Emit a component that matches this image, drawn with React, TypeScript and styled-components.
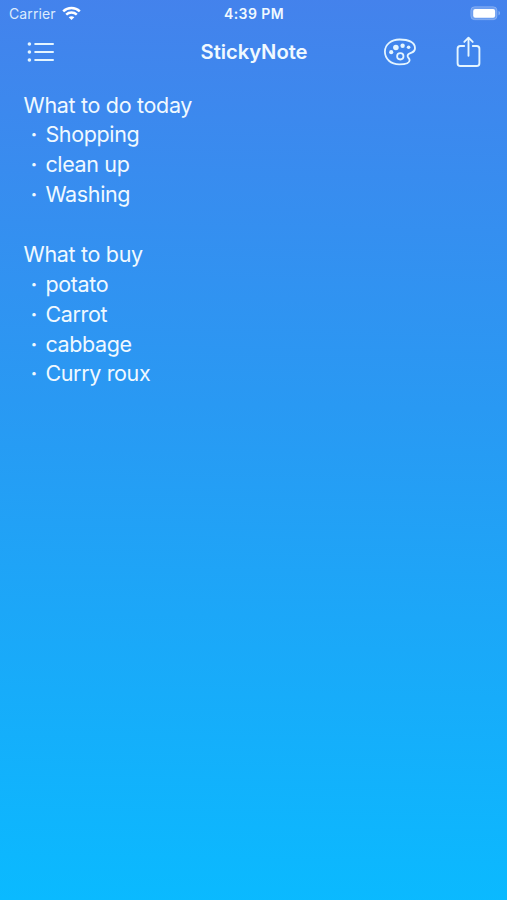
import React from "react";
import styled, { createGlobalStyle } from "styled-components";

const GlobalStyle = createGlobalStyle`
  * { box-sizing: border-box; }
  body { margin: 0; }
`;

const Screen = styled.main`
  width: 100%;
  height: 900px;
  overflow: hidden;
  display: flex;
  flex-direction: column;
  color: #f0f9ff;
  font-family: Inter, "Liberation Sans", sans-serif;
  background: linear-gradient(181deg, #4482ec 0%, #2999f3 45%, #0abaff 100%);
`;

const StatusBar = styled.header`
  height: 27px;
  display: grid;
  grid-template-columns: 1fr auto 1fr;
  align-items: center;
  padding: 0 6px 0 9px;
  font-size: 14px;
  line-height: 27px;
`;

const Carrier = styled.div`
  display: flex;
  align-items: center;
  gap: 6px;
  letter-spacing: 0.1px;
  color: #dcebfd;
`;

const Clock = styled.time`
  font-weight: 600;
  letter-spacing: 0.4px;
  margin-right: 2px;
`;

const BatterySlot = styled.div`
  display: flex;
  justify-content: flex-end;
`;

const NavBar = styled.nav`
  height: 50px;
  display: grid;
  grid-template-columns: 1fr auto 1fr;
  align-items: center;
  padding: 0 26px 0 27px;
`;

const Title = styled.h1`
  margin: 0;
  font-size: 20.2px;
  font-weight: 600;
  line-height: 50px;
  letter-spacing: -0.05px;
`;

const Actions = styled.div<{ $end?: boolean }>`
  display: flex;
  align-items: center;
  gap: 40px;
  justify-content: ${(p) => (p.$end ? "flex-end" : "flex-start")};
`;

const IconButton = styled.button`
  display: flex;
  padding: 0;
  border: 0;
  background: none;
  color: #e4f5ff;
`;

const Note = styled.article`
  padding: 13.6px 23.6px;
  font-size: 21.5px;
  line-height: 29.88px;
  letter-spacing: -0.36px;
`;

const Section = styled.section`
  margin-bottom: 29.88px;
`;

const Heading = styled.h2`
  margin: 0;
  font: inherit;
  letter-spacing: -0.32px;
`;

const Items = styled.ul`
  margin: 0;
  padding: 0;
  list-style: none;
`;

const Item = styled.li`
  display: flex;
`;

const Bullet = styled.span`
  width: 21.8px;
  padding-left: 7px;
  font-weight: 600;
`;

const notes = [
  { title: "What to do today", items: ["Shopping", "clean up", "Washing"] },
  { title: "What to buy", items: ["potato", "Carrot", "cabbage", "Curry roux"] },
];

const WifiIcon = () => (
  <svg width="19" height="15" viewBox="0 0 19 15" fill="none" stroke="#fff" strokeWidth="2.5">
    <path d="M1.2 5.3C5.8.9 13.2.9 17.8 5.3" />
    <path d="M4.2 8.6c3-2.8 7.6-2.8 10.6 0" />
    <path d="M6.7 11.2c1.6-1.4 4-1.4 5.6 0L9.5 14z" fill="#fff" stroke="none" />
  </svg>
);

const BatteryIcon = () => (
  <svg width="31" height="15" viewBox="0 0 31 15">
    <rect x=".8" y=".7" width="26.2" height="13" rx="3.8" fill="#fff" fillOpacity=".22" stroke="#fff" strokeOpacity=".22" />
    <rect x="3.2" y="2.9" width="21.9" height="8.8" rx="2" fill="#fff" />
    <path d="M28.5 5v4.2c2-.5 2-3.7 0-4.2z" fill="#fff" fillOpacity=".35" />
  </svg>
);

const ListIcon = () => (
  <svg width="28" height="22" viewBox="0 0 28 22" fill="currentColor" stroke="currentColor" strokeLinecap="round" strokeWidth="2">
    {[3, 11, 19].map((y) => (
      <g key={y}>
        <circle cx="2.4" cy={y} r="1.8" stroke="none" />
        <path d={`M8.2 ${y}H26`} />
      </g>
    ))}
  </svg>
);

const PaletteIcon = () => (
  <svg width="32" height="28" viewBox="0 0 32 28" fill="none" stroke="currentColor" strokeWidth="1.8" strokeLinejoin="round">
    <path d="M15.5 1.5C7.4 1.5.9 6.4.9 13.6c0 7.4 6 12.7 14.4 12.7 6.3 0 10.3-1.6 10.3-4.1 0-1.7-2-2.4-2-4.3 0-2.2 1.8-2.3 4-3.2 2-.8 3.4-2.1 3.4-4.5 0-5.9-6.2-8.7-15.5-8.7z" />
    <circle cx="16.3" cy="18.3" r="3.2" />
    <g fill="currentColor" stroke="none">
      <circle cx="7.2" cy="14.2" r="2.1" />
      <circle cx="11.9" cy="9.5" r="2.8" />
      <circle cx="18.6" cy="7.8" r="2.2" />
      <circle cx="24.6" cy="9.2" r="1.8" />
    </g>
  </svg>
);

const ShareIcon = () => (
  <svg width="25" height="32" viewBox="0 0 25 32" fill="none" stroke="currentColor" strokeWidth="1.9" strokeLinecap="round" strokeLinejoin="round">
    <path d="M8.2 10H4.4C2.6 10 1.6 11 1.6 12.8v14.4C1.6 29 2.6 30 4.4 30h16.2c1.8 0 2.8-1 2.8-2.8V12.8c0-1.8-1-2.8-2.8-2.8h-3.8" />
    <path d="M12.5 19.8V2M8.3 5.9 12.5 1.7l4.2 4.2" />
  </svg>
);

export default function App() {
  return (
    <>
      <GlobalStyle />
      <Screen>
        <StatusBar>
          <Carrier>
            Carrier
            <WifiIcon />
          </Carrier>
          <Clock>4:39 PM</Clock>
          <BatterySlot>
            <BatteryIcon />
          </BatterySlot>
        </StatusBar>
        <NavBar>
          <Actions>
            <IconButton aria-label="Notes"><ListIcon /></IconButton>
          </Actions>
          <Title>StickyNote</Title>
          <Actions $end>
            <IconButton aria-label="Theme"><PaletteIcon /></IconButton>
            <IconButton aria-label="Share"><ShareIcon /></IconButton>
          </Actions>
        </NavBar>
        <Note>
          {notes.map((note) => (
            <Section key={note.title}>
              <Heading>{note.title}</Heading>
              <Items>
                {note.items.map((item) => (
                  <Item key={item}>
                    <Bullet>·</Bullet>
                    {item}
                  </Item>
                ))}
              </Items>
            </Section>
          ))}
        </Note>
      </Screen>
    </>
  );
}
